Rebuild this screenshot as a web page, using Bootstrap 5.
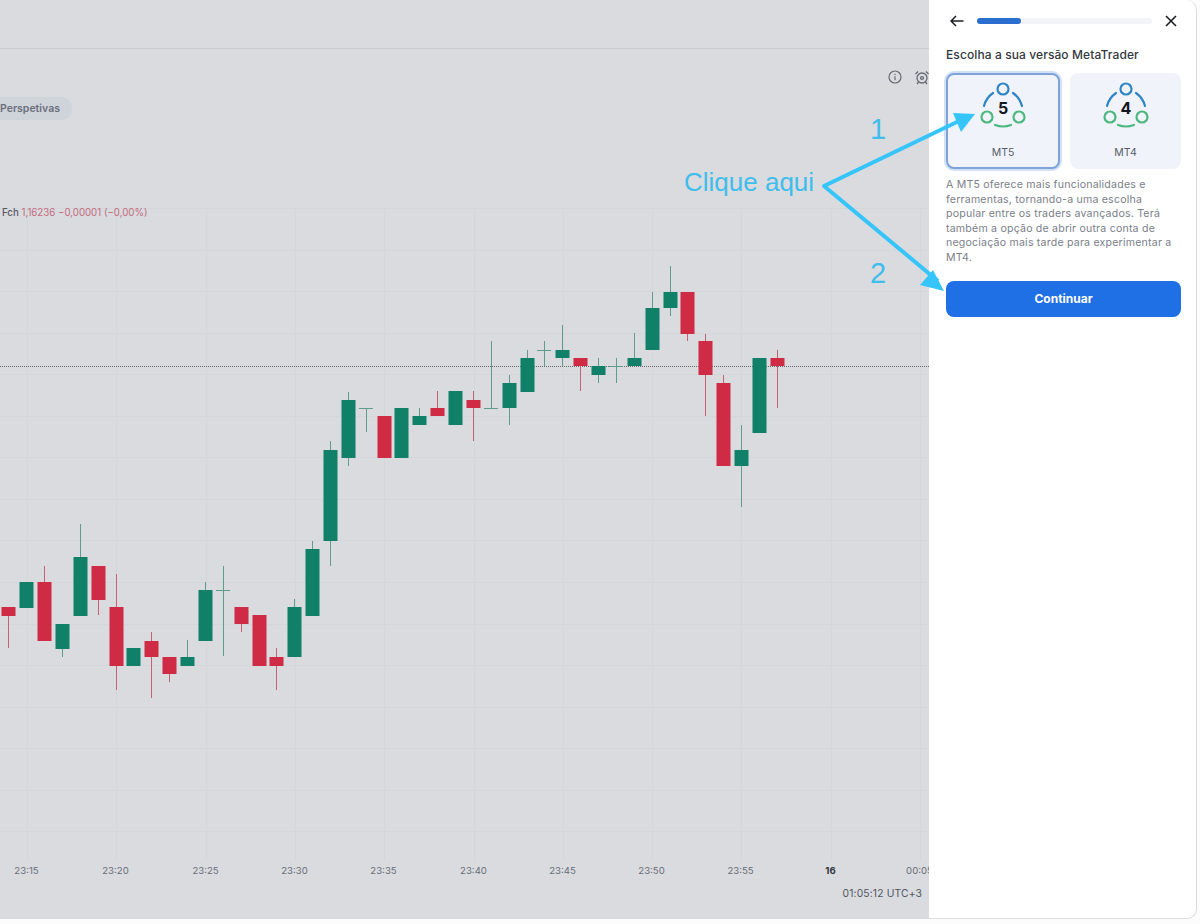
<!DOCTYPE html>
<html lang="pt">
<head>
  <meta charset="UTF-8" />
  <meta name="viewport" content="width=device-width, initial-scale=1.0" />
  <title>Escolha a sua versão MetaTrader</title>
  <link href="https://cdn.jsdelivr.net/npm/bootstrap@5.3.3/dist/css/bootstrap.min.css" rel="stylesheet" />
  <style>
    html, body { height: 100%; }
    body {
      font-family: 'Inter', 'Liberation Sans', sans-serif;
      background: #fcfcfc;
      overflow: hidden;
    }
    .screen { width: 1197px; height: 919px; }
    .chart-pane { width: 929px; background: #d9dbdf; overflow: hidden; }
    .top-strip { height: 49px; border-bottom: 1px solid #c8cbd0; }
    .tool-strip { height: 151px; }
    .pill-persp {
      height: 23px;
      line-height: 23px;
      margin-top: 48px;
      padding-right: 12px;
      background: #cfd3da;
      color: #6a707c;
      font-size: 10.5px;
      font-weight: 600;
    }
    .tool-icons { gap: 12px; margin-right: -1px; margin-top: 21px; }
    .chart-canvas { position: relative; height: 680px; }
    .chart-canvas svg { display: block; }
    .legend-line {
      position: absolute;
      left: 2px;
      top: 6px;
      font-size: 9.7px;
      line-height: 14px;
      color: #c46a7b;
    }
    .legend-line b { font-weight: 500; color: #555a63; }
    .axis-label { font-size: 9.6px; fill: #6a6f78; text-anchor: middle; }
    .axis-day { font-size: 9.6px; font-weight: 700; fill: #33373d; text-anchor: middle; }
    .clock-text {
      font-size: 10.3px;
      line-height: 14px;
      color: #50555e;
      padding-right: 7px;
      padding-top: 6px;
      letter-spacing: .15px;
    }
    .side-pane {
      width: 268px;
      background: #fff;
      padding: 0 15px 0 17px;
      border-right: 1px solid #dcdcdc;
      border-bottom: 1px solid #dcdcdc;
      border-radius: 0 10px 10px 0;
    }
    .side-top { height: 42px; gap: 13px; padding: 0 4px 0 4px; }
    .progress-track { height: 6px; flex: 1; background: #f2f4f7; border-radius: 3px; margin-top: 0; }
    .progress-fill { width: 44px; height: 6px; background: #2a6fd0; border-radius: 3px; }
    .side-title {
      font-size: 12px;
      line-height: 16px;
      font-weight: 500;
      color: #333840;
      margin: 5px 0 10px;
      letter-spacing: .1px;
    }
    .version-row { gap: 10px; margin-bottom: 9px; }
    .version-opt {
      flex: 1 1 0;
      height: 96px;
      background: #f0f4fa;
      border-radius: 8px;
      color: #555c68;
      font-size: 10.5px;
      border: 2px solid transparent;
      padding-top: 7px;
    }
    .version-opt.picked {
      border-color: #7ea3da;
      box-shadow: 0 0 0 2px #d3e1f5;
      flex: 0 0 114px;
    }
    .version-opt svg { display: block; }
    .version-opt span { margin-top: 12px; line-height: 14px; }
    .version-num { font-size: 16px; font-weight: 700; fill: #14171c; text-anchor: middle; }
    .side-text {
      font-size: 10.6px;
      line-height: 14.5px;
      letter-spacing: .2px;
      color: #7b8089;
      margin: 0 0 16px;
    }
    .btn-go {
      width: 100%;
      height: 36px;
      padding: 0;
      background: #1f6fe5;
      border: 0;
      border-radius: 8px;
      font-size: 12px;
      font-weight: 700;
      color: #fff;
    }
    .note-layer { position: absolute; left: 0; top: 0; pointer-events: none; }
    .note-text { font-family: 'Liberation Sans', Arial, sans-serif; fill: #3fbdec; }
  </style>
</head>
<body>

  <svg width="0" height="0" class="d-block position-absolute">
    <symbol id="mtRing" viewBox="0 0 60 52">
      <circle cx="30" cy="7" r="5.5" fill="none" stroke="#2f86c7" stroke-width="2.2" />
      <circle cx="14" cy="35" r="5.5" fill="none" stroke="#4cb87f" stroke-width="2.2" />
      <circle cx="46" cy="35" r="5.5" fill="none" stroke="#4cb87f" stroke-width="2.2" />
      <path d="M11 24 Q13 16 20 11 M40 11 Q47 16 49 24" fill="none" stroke="#2f86c7" stroke-width="2.2" stroke-linecap="round" />
      <path d="M22 43 Q30 46 38 43" fill="none" stroke="#4cb87f" stroke-width="2.2" stroke-linecap="round" />
    </symbol>
  </svg>

  <div class="screen d-flex">

    <!-- chart side -->
    <div class="chart-pane d-flex flex-column">
      <div class="top-strip"></div>
      <div class="tool-strip d-flex justify-content-between align-items-start">
        <div class="pill-persp rounded-end-pill">Perspetivas</div>
        <div class="tool-icons d-flex">
          <svg width="14" height="14" viewBox="0 0 14 14" fill="none" stroke="#666b73" stroke-width="1.2">
            <circle cx="7" cy="7" r="6" />
            <path d="M7 6.2V10.2M7 3.8V5" />
          </svg>
          <svg width="16" height="15" viewBox="0 0 16 15" fill="none" stroke="#666b73" stroke-width="1.3">
            <circle cx="8" cy="8" r="5" />
            <circle cx="8" cy="8" r="1.4" />
            <path d="M1.5 4 4 1.5M14.5 4 12 1.5M4.5 12 3 14M11.5 12 13 14" />
          </svg>
        </div>
      </div>

      <div class="chart-canvas">
        <svg id="chart" width="929" height="680" viewBox="0 200 929 680"></svg>
        <div class="legend-line"><b>Fch</b> 1,16236 −0,00001 (−0,00%)</div>
      </div>

      <div class="clock-text text-end">01:05:12 UTC+3</div>
    </div>

    <!-- account panel -->
    <aside class="side-pane">
      <div class="side-top d-flex align-items-center">
        <svg width="14" height="12" viewBox="0 0 14 12" fill="none" stroke="#1b1e23" stroke-width="1.5">
          <path d="M13.5 6H1.2M6 1 1 6l5 5" />
        </svg>
        <div class="progress-track"><div class="progress-fill"></div></div>
        <svg width="12" height="12" viewBox="0 0 12 12" fill="none" stroke="#1b1e23" stroke-width="1.6">
          <path d="M1 1l10 10M11 1 1 11" />
        </svg>
      </div>

      <div class="side-title">Escolha a sua versão MetaTrader</div>

      <div class="version-row d-flex">
        <div class="version-opt picked d-flex flex-column align-items-center">
          <svg width="60" height="52" viewBox="0 0 60 52">
            <use href="#mtRing" width="60" height="52" />
            <text x="30" y="32" class="version-num">5</text>
          </svg>
          <span>MT5</span>
        </div>
        <div class="version-opt d-flex flex-column align-items-center">
          <svg width="60" height="52" viewBox="0 0 60 52">
            <use href="#mtRing" width="60" height="52" />
            <text x="30" y="32" class="version-num">4</text>
          </svg>
          <span>MT4</span>
        </div>
      </div>

      <p class="side-text">A MT5 oferece mais funcionalidades e<br>ferramentas, tornando-a uma escolha<br>popular entre os traders avançados. Terá<br>também a opção de abrir outra conta de<br>negociação mais tarde para experimentar a<br>MT4.</p>

      <button type="button" class="btn btn-primary btn-go">Continuar</button>
    </aside>
  </div>

  <!-- hand drawn notes on top of the screenshot -->
  <svg class="note-layer" width="1200" height="924" viewBox="0 0 1200 924">
    <path d="M959 121 824 186 938 281" fill="none" stroke="#35c5fb" stroke-width="4" stroke-linejoin="round" />
    <path d="M975 114 953 113 961 132Z" fill="#35c5fb" />
    <path d="M944 291 933 270 920 285Z" fill="#35c5fb" />
    <text class="note-text" x="684" y="191" font-size="26">Clique aqui</text>
    <text class="note-text" x="870" y="139" font-size="29">1</text>
    <text class="note-text" x="870" y="283" font-size="29">2</text>
  </svg>

  <script src="https://cdn.jsdelivr.net/npm/bootstrap@5.3.3/dist/js/bootstrap.bundle.min.js"></script>
  <script>
    // x, wick top, wick bottom, body top, body bottom, g/r
    const candles = [
      [8, 607, 648, 607, 616, 'r'], [26, 582, 608, 582, 608, 'g'], [44, 566, 641, 582, 641, 'r'],
      [62, 624, 657, 624, 649, 'g'], [80, 524, 616, 557, 616, 'g'], [98, 566, 615, 566, 600, 'r'],
      [116, 574, 690, 607, 666, 'r'], [133, 648, 666, 648, 666, 'g'], [151, 632, 698, 641, 657, 'r'],
      [169, 657, 682, 657, 674, 'r'], [187, 640, 666, 657, 666, 'g'], [205, 582, 641, 590, 641, 'g'],
      [223, 566, 656, 590, 590, 'g'], [241, 607, 632, 607, 624, 'r'], [259, 615, 666, 615, 666, 'r'],
      [276, 648, 690, 657, 666, 'r'], [294, 599, 657, 607, 657, 'g'], [312, 541, 616, 549, 616, 'g'],
      [330, 441, 566, 450, 541, 'g'], [348, 392, 466, 400, 458, 'g'], [366, 408, 432, 408, 408, 'g'],
      [384, 416, 458, 416, 458, 'r'], [401, 408, 458, 408, 458, 'g'], [419, 408, 425, 416, 425, 'g'],
      [437, 391, 416, 408, 416, 'r'], [455, 391, 425, 391, 425, 'g'], [473, 391, 441, 400, 408, 'r'],
      [491, 341, 408, 408, 408, 'g'], [509, 375, 425, 383, 408, 'g'], [527, 350, 392, 358, 392, 'g'],
      [544, 341, 366, 350, 350, 'g'], [562, 325, 366, 350, 358, 'g'], [580, 358, 391, 358, 366, 'r'],
      [598, 358, 383, 366, 375, 'g'], [616, 358, 383, 366, 366, 'g'], [634, 333, 366, 358, 366, 'g'],
      [652, 292, 350, 308, 350, 'g'], [670, 266, 316, 292, 308, 'g'], [687, 292, 341, 292, 334, 'r'],
      [705, 334, 416, 341, 375, 'r'], [723, 375, 466, 383, 466, 'r'], [741, 425, 507, 450, 466, 'g'],
      [759, 358, 433, 358, 433, 'g'], [777, 350, 408, 358, 366, 'r']
    ];
    const times = ['23:15', '23:20', '23:25', '23:30', '23:35', '23:40', '23:45', '23:50', '23:55', '16', '00:05'];
    const bodyCol = { g: '#118069', r: '#cf2b44' };
    const wickCol = { g: '#5f9c8f', r: '#c8606f' };

    let out = '';
    for (let i = 0; i < 16; i++) {
      const y = 208.5 + Math.round(i * 41.55);
      out += `<line x1="0" x2="929" y1="${y}" y2="${y}" stroke="#d3d6da" />`;
    }
    times.forEach((t, i) => {
      const x = Math.round(27 + i * 89.3) + 0.5;
      out += `<line x1="${x}" x2="${x}" y1="208" y2="860" stroke="#d3d6da" />`;
      out += `<text x="${x - 1}" y="874" class="${t === '16' ? 'axis-day' : 'axis-label'}">${t}</text>`;
    });
    out += '<line x1="0" x2="929" y1="366.5" y2="366.5" stroke="#65696f" stroke-dasharray="1 1" />';
    candles.forEach(([x, wt, wb, bt, bb, c]) => {
      out += `<line x1="${x + 0.5}" x2="${x + 0.5}" y1="${wt}" y2="${wb}" stroke="${wickCol[c]}" />`;
      if (bt === bb) {
        out += `<line x1="${x - 7}" x2="${x + 7}" y1="${bt + 0.5}" y2="${bt + 0.5}" stroke="${wickCol[c]}" />`;
      } else {
        out += `<rect x="${x - 6.5}" y="${bt}" width="14" height="${bb - bt}" fill="${bodyCol[c]}" />`;
      }
    });
    document.getElementById('chart').innerHTML = out;
  </script>
</body>
</html>
